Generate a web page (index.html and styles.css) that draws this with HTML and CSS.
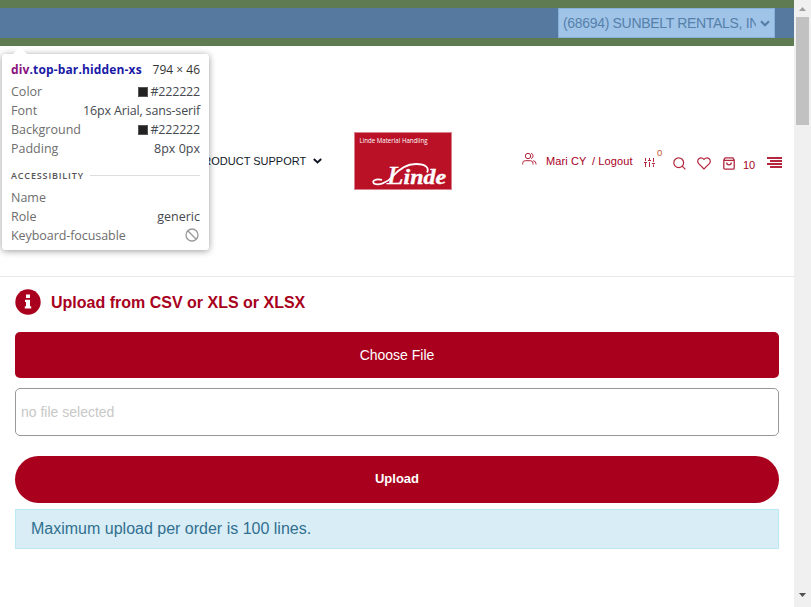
FILE: index.html
```html
<!DOCTYPE html>
<html lang="en">
<head>
<meta charset="utf-8">
<title>Upload order</title>
<link rel="stylesheet" href="styles.css">
</head>
<body>
<div class="window">
  <div class="page">
    <div class="top-bar">
      <div class="top-content">
        <div class="account"><span class="account-name">(68694) SUNBELT RENTALS, INC</span>
          <svg class="chev" width="10" height="7" viewBox="0 0 10 7"><path d="M1 1.3 5 5.2 9 1.3" fill="none" stroke="currentColor" stroke-width="2.3"/></svg>
        </div>
      </div>
    </div>
    <header class="header">
      <nav class="nav"><span class="nav-label">PRODUCT SUPPORT</span><svg width="9" height="6" viewBox="0 0 9 6"><path d="M.8.9 4.5 4.4 8.2.9" fill="none" stroke="#111827" stroke-width="2"/></svg></nav>
      <svg class="logo" width="98" height="58" viewBox="0 0 98 58">
        <rect x=".5" y=".5" width="97" height="57" fill="#ba1126" stroke="#d9828d"/>
        <text class="logo-small" x="5.5" y="11" textLength="68" lengthAdjust="spacingAndGlyphs">Linde Material Handling</text>
        <text class="logo-word" x="33" y="52" textLength="59" lengthAdjust="spacingAndGlyphs"><tspan class="logo-cap">L</tspan>inde</text>
        <path d="M73 40.5C75.500 36 72 32 62 32 51 32 44 38 38 45 33 51 24 54 20 51.500 17.500 49 21 46.500 28 47.800" fill="none" stroke="#fff" stroke-width="1.8"/>
      </svg>
      <div class="tools">
        <svg class="users" width="15" height="14" viewBox="0 0 15 14"><g fill="none" stroke="currentColor"><circle cx="6" cy="4" r="2.7"/><path d="M.7 12.500V11.200Q.7 8.700 3.200 8.700H8.400Q11 8.700 11 11.200V12.500M9.100 1.300A2.700 2.700 0 0 1 9.100 6.500M11.200 8.700Q14 9.200 14 11.700V12.500"/></g></svg>
        <span class="user">Mari CY</span><span class="logout">/ Logout</span>
        <svg class="sliders" width="12" height="11" viewBox="0 0 12 11"><path d="M2.500 1V4M2.500 6V10M6.500 1V3M6.500 5V10M10.500 1V5M10.500 7.500V10M1 5.500H4M5 3.500H8M9 6.500H12" fill="none" stroke="currentColor"/></svg>
        <sup class="zero">0</sup>
        <svg class="search" width="13" height="13" viewBox="0 0 13 13"><g fill="none" stroke="currentColor" stroke-width="1.2"><circle cx="5.7" cy="5.7" r="4.9"/><path d="M9.2 9.2 12.4 12.4"/></g></svg>
        <svg class="heart" width="14" height="13" viewBox="0 0 14 13"><path d="M7 12 1.7 6.7C-1.4 3.2 3.5-1.5 7 2.4 10.5-1.5 15.4 3.2 12.3 6.7Z" fill="none" stroke="currentColor" stroke-width="1.2"/></svg>
        <svg class="bag" width="12" height="13" viewBox="0 0 12 13"><path d="M2.2.8H9.8L11.2 3V11Q11.2 12.2 10 12.2H2Q.8 12.2.8 11V3ZM1 3.3H11M3.7 5.5Q3.7 7.8 6 7.8T8.3 5.5" fill="none" stroke="currentColor" stroke-width="1.3"/></svg>
        <span class="count">10</span>
        <svg class="menu" width="15" height="11" viewBox="0 0 15 11"><path d="M0 1H15M3 4H15M0 7H15M3 10H15" stroke="currentColor" stroke-width="2"/></svg>
      </div>
    </header>
    <main class="main">
      <h1 class="title"><svg width="26" height="26" viewBox="0 0 26 26"><circle cx="13" cy="13" r="12.7" fill="#a8001d"/><path d="M11 5.5H15V9H11ZM10 10.7H15V17.2H16.2V19.5H9.8V17.2H11V13H10Z" fill="#fff"/></svg><span class="title-text">Upload from CSV or XLS or XLSX</span></h1>
      <div class="choose">Choose File</div>
      <div class="file">no file selected</div>
      <div class="upload">Upload</div>
      <div class="notice">Maximum upload per order is 100 lines.</div>
    </main>
  </div>
  <div class="scrollbar">
    <svg width="7" height="4" viewBox="0 0 7 4"><path d="M0 4 3.5 0 7 4Z" fill="#a0a0a0"/></svg>
    <div class="thumb"></div>
    <svg class="down" width="7" height="4" viewBox="0 0 7 4"><path d="M0 0H7L3.5 4Z" fill="#505050"/></svg>
  </div>
</div>
<div class="tooltip">
  <svg class="arrow" width="14" height="7" viewBox="0 0 14 7"><path d="M0 7 7 0 14 7Z" fill="#fff"/></svg>
  <div class="row head"><span class="selector"><span class="tag">div</span>.top-bar.hidden-xs</span><span class="size">794 × 46</span></div>
  <div class="row"><span>Color</span><span class="val"><i class="swatch"></i><span class="hex">#222222</span></span></div>
  <div class="row"><span>Font</span><span class="val v-font">16px Arial, sans-serif</span></div>
  <div class="row"><span>Background</span><span class="val"><i class="swatch"></i><span class="hex">#222222</span></span></div>
  <div class="row"><span>Padding</span><span class="val">8px 0px</span></div>
  <div class="section"><span>ACCESSIBILITY</span></div>
  <div class="row"><span>Name</span></div>
  <div class="row"><span>Role</span><span class="val">generic</span></div>
  <div class="row"><span class="focusable">Keyboard-focusable</span><svg class="no" width="14" height="14" viewBox="0 0 14 14"><g fill="none" stroke="#999" stroke-width="1.3"><circle cx="7" cy="7" r="6"/><path d="M2.8 2.8 11.2 11.2"/></g></svg></div>
</div>
</body>
</html>
```
FILE: styles.css
```css
* { box-sizing: border-box; }
body { margin: 0; background: #fff; font-family: "Liberation Sans", Arial, sans-serif; overflow: hidden; }
svg { display: block; flex: none; }
.window { display: flex; height: 607px; }
.page { width: 794px; flex: none; }
.top-bar { height: 46px; padding: 8px 0; background: #5f7b52; }
.top-content { height: 30px; background: #567a9f; display: flex; justify-content: flex-end; padding-right: 19px; }
.account { width: 217px; height: 30px; background: #a0c4e8; border: 1px solid #86b0da; color: #5580aa; display: flex; align-items: center; padding-left: 4px; font-size: 14px; }
.account-name { width: 193px; overflow: hidden; white-space: nowrap; letter-spacing: -.32px; line-height: 20px; }
.chev { margin-left: 4px; }
.header { height: 231px; border-bottom: 1px solid #e8e8e8; display: flex; align-items: center; }
.nav { margin-left: 196px; width: 158px; display: flex; align-items: center; font-size: 11px; color: #111827; white-space: nowrap; }
.nav-label { width: 117px; text-align: right; padding-right: 7px; }
.logo-small { font: 6.5px "Open Sans", sans-serif; fill: #fff; }
.logo-word { font: italic bold 20px "Liberation Serif", serif; fill: #fff; stroke: #fff; stroke-width: .4px; }
.logo-cap { font-size: 25px; font-weight: normal; }
.tools { margin-left: 70px; display: flex; align-items: center; color: #a8001d; font-size: 11px; white-space: nowrap; }
.tools svg { opacity: .85; }
.users { margin-bottom: 4px; }
.user { margin-left: 9px; width: 46px; letter-spacing: .1px; }
.logout { width: 51px; letter-spacing: .1px; }
.sliders { margin-top: 2px; }
.zero { width: 7px; margin-left: 2px; font-size: 9.5px; line-height: 10px; margin-bottom: 16px; vertical-align: baseline; color: #c0552f; }
.search { margin: 4px 0 0 9px; }
.heart { margin: 4px 0 0 11px; }
.bag { margin: 4px 0 0 12px; }
.count { margin: 7px 0 0 8px; width: 12px; }
.menu { margin: 2px 0 0 12px; }
.main { padding: 11px 15px 0; }
.title { margin: 0; height: 28px; display: flex; align-items: center; font-size: 16px; color: #a8001d; }
.title-text { margin-left: 10px; padding-top: 2px; white-space: nowrap; }
.choose { margin-top: 16px; height: 46px; border-radius: 5px; background: #a8001d; color: #fff; display: flex; align-items: center; justify-content: center; font-size: 14px; }
.file { margin-top: 10px; height: 48px; border: 1px solid #999; border-radius: 5px; padding: 0 5px; display: flex; align-items: center; font-size: 14px; color: #c8c8c8; }
.upload { margin-top: 20px; height: 47px; border-radius: 24px; background: #a8001d; color: #fff; display: flex; align-items: center; justify-content: center; padding-bottom: 2px; font-size: 13px; font-weight: bold; }
.notice { margin-top: 6px; height: 40px; background: #d9edf7; border: 1px solid #bce8f1; padding: 0 15px; line-height: 38px; font-size: 16px; color: #31708f; }
.scrollbar { width: 17px; background: #f0f0f0; display: flex; flex-direction: column; align-items: center; padding: 7px 0; }
.thumb { width: 13px; height: 108px; margin-top: 6px; background: #c1c1c1; }
.down { margin-top: auto; margin-bottom: 3px; }
.tooltip { position: absolute; left: 2px; top: 54px; width: 207px; height: 196px; background: #fff; border-radius: 3px; box-shadow: 0 1px 7px rgba(0,0,0,.4); padding: 6px 9px; font: 12.5px "Open Sans", sans-serif; color: #6e6e6e; }
.arrow { position: absolute; left: 11px; top: -7px; }
.row { display: flex; justify-content: space-between; align-items: center; height: 19px; white-space: nowrap; }
.head { height: 22px; padding-bottom: 3px; }
.selector { font-weight: bold; color: #1a1aa6; font-size: 12px; letter-spacing: .14px; }
.tag { color: #881280; }
.size { color: #333; font-size: 12px; }
.val { display: flex; align-items: center; color: #454950; }
.v-font { letter-spacing: -.16px; }
.hex { letter-spacing: -.2px; }
.focusable { letter-spacing: -.07px; }
.swatch { width: 10px; height: 10px; background: #222; border: 1px solid #555; margin-right: 2px; }
.section { display: flex; align-items: center; height: 30px; font-size: 9px; letter-spacing: .85px; font-weight: 600; color: #555; padding-top: 4px; }
.section::after { content: ""; flex: 1; height: 1px; background: #ddd; margin-left: 6px; }
.no { margin: 0 1px 1px 0; }
```
